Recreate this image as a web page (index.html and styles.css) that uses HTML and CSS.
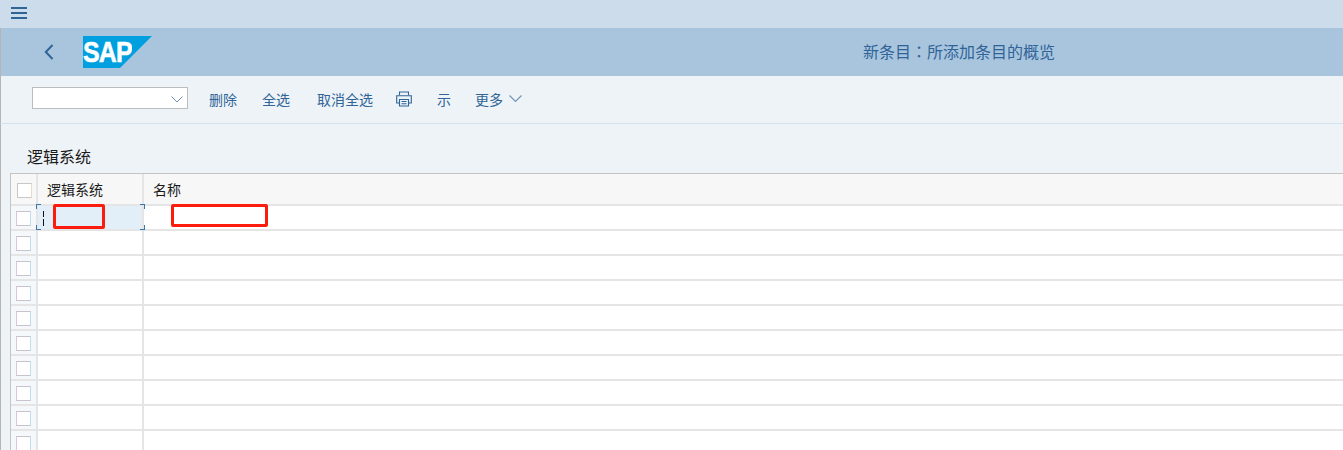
FILE: index.html
```html
<!DOCTYPE html>
<html lang="zh-CN">
<head>
  <meta charset="UTF-8" />
  <title>新条目：所添加条目的概览</title>
  <link rel="stylesheet" href="styles.css">
</head>
<body>
  <div class="menu-bar">
    <svg class="menu-icon" width="16" height="13" viewBox="0 0 16 13"><path d="M0 2h16M0 7h16M0 12h16" stroke="#2f6497" stroke-width="2" fill="none"/></svg>
  </div>

  <header class="shell-bar">
    <svg class="back-icon" width="10" height="16" viewBox="0 0 10 16"><path d="M8.500 1L1.800 8l6.700 7" stroke="#2f6497" stroke-width="2" fill="none"/></svg>
    <div class="logo">
      <svg width="69" height="32" viewBox="0 0 69 32"><polygon points="0,0 69,0 37,32 0,32" fill="#009fe0"/></svg>
      <span class="logo-text">SAP</span>
    </div>
    <div class="shell-title">新条目<span class="colon" lang="zh-TW">：</span>所添加条目的概览</div>
  </header>

  <div class="toolbar">
    <div class="select-box">
      <svg width="12" height="7" viewBox="0 0 12 7"><path d="M.5 .5L6 6l5.500-5.500" stroke="#6d94b8" stroke-width="1" fill="none"/></svg>
    </div>
    <a class="tool tool-first">删除</a>
    <a class="tool tool-all">全选</a>
    <a class="tool tool-none">取消全选</a>
    <svg class="print-icon" width="16" height="16" viewBox="0 0 16 16" fill="none" stroke="#2f6497" stroke-width="1.100">
      <path d="M3.500 4V1h9v3M3.500 12H.7V4.700h14.600V12h-2.800"/>
      <path d="M3.500 8.500h9V15h-9zM5.500 10.500h5M5.500 12.800h5"/>
    </svg>
    <a class="tool tool-show">示</a>
    <a class="tool tool-more">更多
      <svg width="13" height="7" viewBox="0 0 13 7"><path d="M.5 .5l6 6 6-6" stroke="#6d94b8" stroke-width="1.100" fill="none"/></svg>
    </a>
  </div>

  <main class="content">
    <h2 class="table-title">逻辑系统</h2>
    <div class="table">
      <div class="row head">
        <div class="sel"><span class="check check-head"></span></div>
        <div class="col-a">逻辑系统</div>
        <div class="col-b">名称</div>
      </div>
      <div class="row active">
        <div class="sel"><span class="check"></span></div>
        <div class="col-a"><span class="caret"></span><i class="corner tl"></i><i class="corner tr"></i><i class="corner bl"></i><i class="corner br"></i></div>
        <div class="col-b"></div>
      </div>
      <div class="row"><div class="sel"><span class="check"></span></div><div class="col-a"></div><div class="col-b"></div></div>
      <div class="row"><div class="sel"><span class="check"></span></div><div class="col-a"></div><div class="col-b"></div></div>
      <div class="row"><div class="sel"><span class="check"></span></div><div class="col-a"></div><div class="col-b"></div></div>
      <div class="row"><div class="sel"><span class="check"></span></div><div class="col-a"></div><div class="col-b"></div></div>
      <div class="row"><div class="sel"><span class="check"></span></div><div class="col-a"></div><div class="col-b"></div></div>
      <div class="row"><div class="sel"><span class="check"></span></div><div class="col-a"></div><div class="col-b"></div></div>
      <div class="row"><div class="sel"><span class="check"></span></div><div class="col-a"></div><div class="col-b"></div></div>
      <div class="row"><div class="sel"><span class="check"></span></div><div class="col-a"></div><div class="col-b"></div></div>
      <div class="row"><div class="sel"><span class="check"></span></div><div class="col-a"></div><div class="col-b"></div></div>
    </div>
  </main>

  <!-- red redaction marks drawn over the table -->
  <div class="mark mark-a"></div>
  <div class="mark mark-b"></div>
</body>
</html>
```

FILE: styles.css
```css
* {
  margin: 0;
  padding: 0;
  box-sizing: border-box;
}

html, body {
  height: 450px;
  overflow: hidden;
}

body {
  position: relative;
  font-family: "Noto Sans CJK SC", "Liberation Sans", sans-serif;
  font-size: 14px;
  background: #eef3f8;
  color: #2f6497;
}

.menu-bar {
  height: 28px;
  background: #cddcea;
  padding: 6px 0 0 11px;
}

.menu-icon {
  display: block;
}

.shell-bar {
  height: 48px;
  background: #a9c5de;
  display: flex;
  align-items: center;
  border-left: 1px solid #b5b5b5;
}

.back-icon {
  margin-left: 43px;
}

.logo {
  position: relative;
  width: 69px;
  height: 32px;
  margin-left: 29px;
}

.logo svg {
  display: block;
}

.logo-text {
  position: absolute;
  left: 0;
  top: 0;
  font-family: "Liberation Sans", sans-serif;
  font-weight: bold;
  font-size: 30px;
  line-height: 32px;
  letter-spacing: -1px;
  color: #fff;
  -webkit-text-stroke: 0.6px #fff;
  transform: scaleX(0.83);
  transform-origin: left center;
}

.shell-title {
  position: absolute;
  left: 863px;
  top: 40px;
  font-size: 16px;
  line-height: 22px;
}

.colon {
  font-family: "Noto Sans CJK TC", sans-serif;
}

.toolbar {
  height: 48px;
  display: flex;
  align-items: center;
  padding: 0 0 2px 31px;
  border-left: 1px solid #b5b5b5;
  border-bottom: 1px solid #d5e2ee;
}

.select-box {
  width: 156px;
  height: 22px;
  margin-bottom: 2px;
  background: #fff;
  border: 1px solid #bcbcbc;
  display: flex;
  align-items: center;
  justify-content: flex-end;
  padding: 3px 4px 0 0;
}

.tool {
  line-height: 20px;
  white-space: nowrap;
}

.tool-first {
  margin-left: 21px;
}

.tool-all {
  margin-left: 25px;
}

.tool-none {
  margin-left: 27px;
}

.print-icon {
  margin-left: 23px;
  flex: none;
}

.tool-show {
  margin-left: 25px;
}

.tool-more {
  margin-left: 24px;
  display: flex;
  align-items: center;
  gap: 6px;
}

.content {
  border-left: 1px solid #b5b5b5;
  padding: 20px 0 0 9px;
  height: 326px;
}

.table-title {
  font-size: 16px;
  font-weight: normal;
  line-height: 24px;
  height: 25px;
  margin-left: 17px;
  color: #1a1a1a;
}

.table {
  border-left: 1px solid #c4c4c4;
  border-top: 1px solid #c4c4c4;
  margin-top: 4px;
}

.row {
  display: flex;
  height: 25px;
  border-bottom: 2px solid #e5e5e5;
  background: #fff;
}

.row.head {
  height: 32px;
  background: #f7f7f7;
  color: #1a1a1a;
}

.sel {
  width: 27px;
  flex: none;
  display: flex;
  align-items: center;
  justify-content: center;
  padding-top: 2px;
  background: #f5f8fb;
  border-right: 2px solid #e5e5e5;
}

.head .sel {
  background: #f7f7f7;
}

.check {
  display: block;
  width: 15px;
  height: 15px;
  background: #fff;
  border: 1px solid #c8c2cc;
  border-left-color: #dcc6dc;
  border-right-color: #c4dcef;
}

.check-head {
  margin-left: 1px;
  border-color: #c8c8c8;
  border-right-color: #ecdcc4;
}

.col-a {
  position: relative;
  width: 106px;
  flex: none;
  border-right: 2px solid #e5e5e5;
  padding-left: 9px;
  line-height: 30px;
}

.col-b {
  flex: 1;
  padding-left: 9px;
  line-height: 30px;
}

.active .col-a {
  background: #e3eff8;
}

.caret {
  position: absolute;
  left: 5px;
  top: 5px;
  width: 1px;
  height: 15px;
  background: linear-gradient(#111 0 6px, transparent 6px 8px, #111 8px);
}

.corner {
  position: absolute;
  width: 5px;
  height: 5px;
  border: 0 solid #3a77ae;
}

.corner.tl { left: -2px; top: -2px; border-width: 1px 0 0 1px; }
.corner.tr { right: -3px; top: -2px; border-width: 1px 1px 0 0; }
.corner.bl { left: -2px; bottom: -1px; border-width: 0 0 1px 1px; }
.corner.br { right: -3px; bottom: -1px; border-width: 0 1px 1px 0; }

.mark {
  position: absolute;
  border: 3px solid #fb1c0e;
  border-radius: 2px;
}

.mark-a {
  left: 53px;
  top: 204px;
  width: 52px;
  height: 25px;
}

.mark-b {
  left: 171px;
  top: 204px;
  width: 97px;
  height: 23px;
}
```
